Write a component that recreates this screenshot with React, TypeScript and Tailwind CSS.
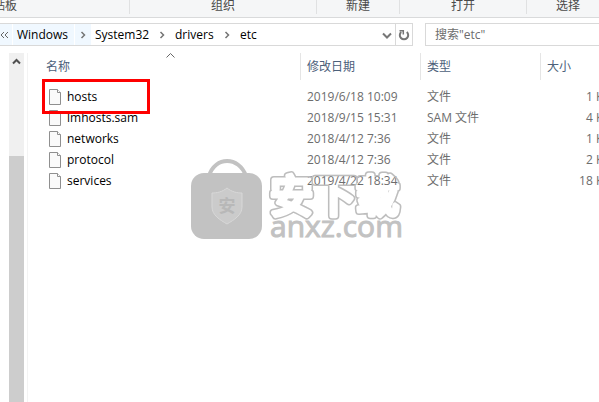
import React from "react";

interface FileEntry {
  name: string;
  modified: string;
  type: string;
  size: string;
}

const files: FileEntry[] = [
  { name: "hosts", modified: "2019/6/18 10:09", type: "文件", size: "1 KB" },
  { name: "lmhosts.sam", modified: "2018/9/15 15:31", type: "SAM 文件", size: "4 KB" },
  { name: "networks", modified: "2018/4/12 7:36", type: "文件", size: "1 KB" },
  { name: "protocol", modified: "2018/4/12 7:36", type: "文件", size: "2 KB" },
  { name: "services", modified: "2019/4/22 18:34", type: "文件", size: "18 KB" },
];

const ribbonGroups = [
  { label: "剪贴板", width: "w-[261px] -ml-[131px]" },
  { label: "组织", width: "w-[187px]" },
  { label: "新建", width: "w-[83px]" },
  { label: "打开", width: "w-[127px]" },
  { label: "选择", width: "w-[83px]" },
];

function Ribbon() {
  return (
    <header className="flex h-[18px] border-b border-[#d9dadb] bg-[#f5f6f7] text-[#4a4a4a]">
      {ribbonGroups.map((group) => (
        <div
          key={group.label}
          className={`h-[14px] shrink-0 border-r border-[#e0e1e2] text-center leading-[12px] ${group.width}`}
        >
          {group.label}
        </div>
      ))}
    </header>
  );
}

function Chevron() {
  return (
    <svg className="h-2 w-2" viewBox="0 0 8 8" fill="none" stroke="#757575" strokeWidth="1.5">
      <path d="M2.5 1 5.5 4 2.5 7" />
    </svg>
  );
}

function AddressBar() {
  return (
    <div className="flex h-[23px] gap-3">
      <nav className="flex min-w-0 flex-1 items-stretch border-y border-r border-[#d9d9d9] text-black">
        <button aria-label="上级位置" className="flex w-3 items-center bg-[#f0f8ff]">
          <svg className="h-2 w-[9px]" viewBox="0 0 9 8" fill="none" stroke="#666" strokeWidth="1">
            <path d="M4 1 1 4l3 3M8 1 5 4l3 3" />
          </svg>
        </button>
        <a href="#windows" className="ml-px w-[61px] bg-[#f0f8ff] pl-1 leading-[21px]">
          Windows
        </a>
        <button aria-label="展开" className="ml-px flex w-4 items-center justify-center bg-[#f0f8ff]">
          <Chevron />
        </button>
        <a href="#system32" className="w-[67px] pl-1 leading-[21px]">
          System32
        </a>
        <button aria-label="展开" className="flex w-2 items-center">
          <Chevron />
        </button>
        <a href="#drivers" className="w-[57px] pl-[9px] leading-[21px]">
          drivers
        </a>
        <button aria-label="展开" className="flex w-2 items-center">
          <Chevron />
        </button>
        <a href="#etc" className="pl-[9px] leading-[21px]">
          etc
        </a>
        <button aria-label="以前的位置" className="ml-auto flex w-4 items-center justify-center">
          <svg className="h-[10px] w-[10px]" viewBox="0 0 10 10" fill="none" stroke="#777" strokeWidth="2">
            <path d="M1 3.5 5 7.5 9 3.5" />
          </svg>
        </button>
        <button
          aria-label="刷新"
          className="flex w-[17px] items-center justify-center border-l border-[#d9d9d9]"
        >
          <svg className="h-3 w-3" viewBox="0 0 12 12" fill="none" stroke="#777" strokeWidth="2">
            <path d="M8.8 3A4.2 4.2 0 1 1 3.2 3" />
            <path d="M1.5 1.7h3.8v3.8" strokeWidth="1.5" />
          </svg>
        </button>
      </nav>
      <input
        type="text"
        aria-label="搜索"
        placeholder={'搜索"etc"'}
        className="w-[174px] border-y border-l border-[#d9d9d9] px-[9px] outline-none placeholder:text-[#6d6d6d]"
      />
    </div>
  );
}

function FileIcon() {
  return (
    <svg className="h-4 w-3 shrink-0" viewBox="0 0 12 16" fill="#fafafa" stroke="#8f8f8f">
      <path d="M.5.5h8l3 3v12H.5z" />
      <path d="M8.5.5v3h3" fill="#fff" />
    </svg>
  );
}

function FileTable() {
  return (
    <table className="w-[583px] table-fixed border-separate border-spacing-0 text-left text-[#6d6d6d]">
      <colgroup>
        <col className="w-[273px]" />
        <col className="w-[120px]" />
        <col className="w-[120px]" />
        <col className="w-[70px]" />
      </colgroup>
      <thead className="text-[#4c607a]">
        <tr className="h-[27px]">
          <th scope="col" className="relative border-r border-[#e5e5e5] pl-[18px] font-normal">
            名称
            <svg
              className="absolute left-[138px] top-0 h-[5px] w-[9px]"
              viewBox="0 0 9 5"
              fill="none"
              stroke="#666"
            >
              <path d="M.5 4.5l4-4 4 4" />
            </svg>
          </th>
          <th scope="col" className="border-r border-[#e5e5e5] pl-[6px] font-normal">
            修改日期
          </th>
          <th scope="col" className="border-r border-[#e5e5e5] pl-[6px] font-normal">
            类型
          </th>
          <th scope="col" className="pl-[6px] font-normal">
            大小
          </th>
        </tr>
      </thead>
      <tbody>
        <tr className="h-[6px]" />
        {files.map((file, index) => (
          <tr key={file.name} className="h-[21px]">
            <td className="relative pl-[21px] text-black">
              <div className="flex items-center gap-[6px]">
                <FileIcon />
                {file.name}
              </div>
              {index === 0 && (
                <div className="absolute -top-[7px] left-[14px] z-10 h-[35px] w-[108px] border-3 border-[#fe0000]" />
              )}
            </td>
            <td className="pl-[6px]">{file.modified}</td>
            <td className="pl-[6px]">{file.type}</td>
            <td className="text-right">{file.size}</td>
          </tr>
        ))}
      </tbody>
    </table>
  );
}

function Scrollbar() {
  return (
    <div className="ml-[9px] flex w-[15px] shrink-0 flex-col bg-[#f0f0f0]">
      <button aria-label="向上滚动" className="flex h-[17px] items-center justify-center">
        <svg className="h-[7px] w-[9px]" viewBox="0 0 9 7" fill="none" stroke="#505050" strokeWidth="2">
          <path d="M1 5.5 4.5 2 8 5.5" />
        </svg>
      </button>
      <div className="mt-[86px] flex-1 bg-[#cdcdcd]" />
    </div>
  );
}

function Watermark() {
  return (
    <svg
      className="pointer-events-none absolute left-[190px] top-[156px] h-[88px] w-[216px]"
      viewBox="0 0 216 88"
    >
      <defs>
        <mask id="outline" maskUnits="userSpaceOnUse" x="70" y="0" width="146" height="88">
          <g
            fontFamily="'Noto Sans CJK SC', sans-serif"
            fontSize="43"
            fontWeight="400"
            strokeLinejoin="round"
          >
            <text x="80" y="56" fill="#fff" stroke="#fff" strokeWidth="8">
              安下载
            </text>
            <text x="80" y="56" fill="#000" stroke="#000" strokeWidth="5">
              安下载
            </text>
          </g>
        </mask>
      </defs>
      <path d="M19 20C25 0 49 0 56 20" fill="none" stroke="#c2c2c2" strokeWidth="4" />
      <rect x="1" y="17" width="71" height="66" rx="13" fill="#c2c2c2" />
      <path
        d="M37 32c5 4 10 5 15 5v14c0 8-8 13-15 17-7-4-15-9-15-17V37c5 0 10-1 15-5z"
        fill="#cbcbcb"
        stroke="#d8d8d8"
      />
      <text
        x="37"
        y="56"
        textAnchor="middle"
        fontFamily="'Noto Sans CJK SC', sans-serif"
        fontSize="17"
        fontWeight="700"
        fill="#b8b8b8"
      >
        安
      </text>
      <rect x="70" width="146" height="88" fill="#bdbdbd" mask="url(#outline)" />
      <text x="80" y="81" fontFamily="'Open Sans', sans-serif" fontSize="30" fill="#c2c2c2" stroke="#c2c2c2">
        anxz.com
      </text>
    </svg>
  );
}

export default function App() {
  return (
    <div className="relative flex min-h-screen flex-col overflow-hidden bg-white font-['Open_Sans','Noto_Sans_CJK_SC',sans-serif] text-xs">
      <Ribbon />
      <div className="pt-[5px] pb-[7px]">
        <AddressBar />
      </div>
      <main className="flex flex-1">
        <Scrollbar />
        <section className="ml-[3px] min-w-0 flex-1 overflow-hidden border-l border-[#f3f3f3]">
          <FileTable />
        </section>
      </main>
      <Watermark />
    </div>
  );
}
